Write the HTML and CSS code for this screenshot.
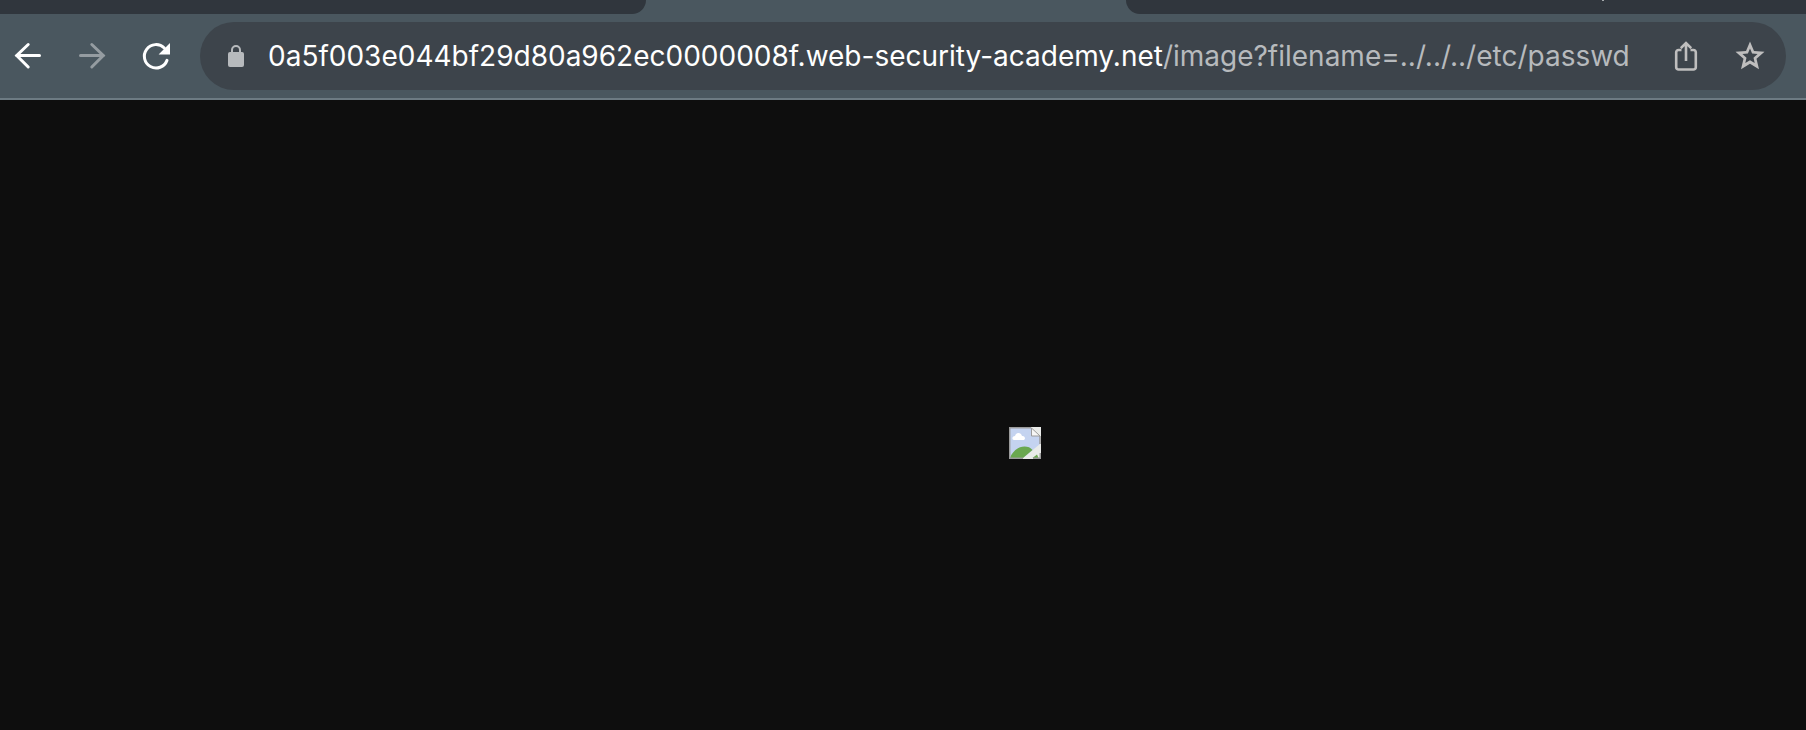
FILE: index.html
```html
<!DOCTYPE html>
<html lang="en">
<head>
<meta charset="utf-8">
<title>Image</title>
<link rel="stylesheet" href="styles.css">
</head>
<body>
<header class="browser">
  <div class="tabs">
    <div class="tab tab-before"></div>
    <div class="tab tab-after"><span class="tab-mark"></span></div>
  </div>
  <nav class="toolbar" aria-label="Browser toolbar">
    <div class="nav-buttons">
      <button class="nav-button" type="button" aria-label="Back">
        <svg class="icon" viewBox="0 0 32 32"><path class="line" d="M27.5 15.500H4.500M16.200 4.500 4.700 15.500l11.500 11.500"/></svg>
      </button>
      <button class="nav-button nav-button-off" type="button" aria-label="Forward">
        <svg class="icon" viewBox="0 0 32 32"><path class="line" d="M4.500 15.500h23M15.800 4.500 27.300 15.500 15.800 27"/></svg>
      </button>
      <button class="nav-button" type="button" aria-label="Reload">
        <svg class="icon" viewBox="0 0 32 32"><path class="line" d="M27 20.400A11.700 11.700 0 1 1 24.300 8"/><path class="solid" d="M30 3v11.400H18.600z"/></svg>
      </button>
    </div>
    <form class="address">
      <svg class="lock" viewBox="0 0 16 22"><path class="lock-shackle" d="M4 9V5a4 4 0 0 1 8 0v4"/><rect class="solid" y="7" width="16" height="15" rx="2"/></svg>
      <div class="url">
        <input class="url-part url-host" type="text" aria-label="Site address" value="0a5f003e044bf29d80a962ec0000008f.web-security-academy.net">
        <input class="url-part url-path" type="text" aria-label="Path" value="/image?filename=../../../etc/passwd">
      </div>
      <button class="action" type="button" aria-label="Share">
        <svg class="icon" viewBox="0 0 32 32"><path class="thin" d="M11.500 10H8.500a2.300 2.300 0 0 0-2.300 2.300v14.900a2.300 2.300 0 0 0 2.300 2.300h15a2.300 2.300 0 0 0 2.300-2.300V12.300A2.300 2.300 0 0 0 23.500 10h-3M16 21V3.500M10.800 8.200 16 3l5.200 5.200"/></svg>
      </button>
      <button class="action" type="button" aria-label="Bookmark this page">
        <svg class="icon" viewBox="0 0 32 32"><path class="solid-hole" d="M16 1.500 20 11l10.500.8-8 7 2.500 10.500-9-5.600-9 5.600 2.500-10.500-8-7L12 11zM16 8.600 13.900 13.600 8.400 14.100 12.500 17.700 11.300 23.100 16 20.200 20.700 23.100 19.500 17.700 23.600 14.100 18.100 13.600z"/></svg>
      </button>
    </form>
  </nav>
</header>
<main class="page">
  <svg class="broken" viewBox="0 0 32 32" role="img" aria-label="Broken image">
    <path fill="#e9ebe9" d="M0 0h32v32H0z"/>
    <path fill="#c4d3f0" d="M1 1h21v8h9v8L14 31H1z"/>
    <path fill="#fff" d="M5 13c-2.500-.5-2-4 1-4 1-4 6-4 7 0 3.500-.5 4 4 1 4z"/>
    <path fill="#6aa84f" d="M1 31c2-6 8-11.500 14.500-11.500 3.500 0 6 1 8 3.500L14 31zM23.500 31l4.500-3.500 1.500 3.500z"/>
    <path fill="none" stroke="#9b9b9b" stroke-width="1.500" d="M31 17V9M22 .7H.7v30.600H14M24 31.300h7.300V26"/>
    <path fill="#f6f6f6" stroke="#9b9b9b" d="M22.500 1v8h8.500z"/>
  </svg>
</main>
</body>
</html>
```
FILE: styles.css
```css
* {
  box-sizing: border-box;
}

body {
  margin: 0;
  min-height: 100vh;
  display: flex;
  flex-direction: column;
  background: #0e0e0e;
  font-family: Inter, "Liberation Sans", sans-serif;
}

.browser {
  background: #4a575f;
  border-bottom: 2px solid #6d7b83;
}

.tabs {
  display: flex;
  justify-content: space-between;
  height: 14px;
}

.tab {
  background: #30363d;
}

.tab-before {
  flex: 0 0 646px;
  border-bottom-right-radius: 16px;
}

.tab-after {
  flex: 0 0 680px;
  display: flex;
  border-bottom-left-radius: 16px;
}

.tab-mark {
  width: 2px;
  height: 1px;
  margin-left: 476px;
  background: #a5a9ac;
}

.toolbar {
  display: flex;
  align-items: center;
  gap: 16px;
  padding: 8px 20px 8px 0;
}

.nav-buttons {
  display: flex;
  gap: 8px;
}

button {
  display: flex;
  align-items: center;
  justify-content: center;
  padding: 0;
  border: 0;
  background: none;
  color: inherit;
}

.nav-button {
  width: 56px;
  height: 56px;
  color: #fff;
}

.nav-button-off {
  color: #959ca1;
}

.icon {
  width: 32px;
  height: 32px;
  fill: none;
}

.line {
  stroke: currentColor;
  stroke-width: 3;
  stroke-linecap: round;
}

.thin {
  stroke: currentColor;
  stroke-width: 2.6;
}

.solid {
  fill: currentColor;
}

.solid-hole {
  fill: currentColor;
  fill-rule: evenodd;
}

.address {
  flex: 1;
  min-width: 0;
  height: 68px;
  display: flex;
  align-items: center;
  padding: 0 4px 0 28px;
  border-radius: 34px;
  background: #3d444b;
  color: #b7babd;
}

.lock {
  width: 16px;
  height: 22px;
}

.lock-shackle {
  fill: none;
  stroke: currentColor;
  stroke-width: 2;
}

.url {
  flex: 1;
  min-width: 0;
  display: flex;
  margin-left: 24px;
  overflow: hidden;
}

.url-part {
  field-sizing: content;
  flex: none;
  height: 40px;
  padding: 0;
  border: 0;
  outline: 0;
  background: none;
  font: 400 28px/40px Inter, "Liberation Sans", sans-serif;
}

.url-host {
  color: #fff;
}

.url-path {
  color: #b7babd;
}

.action {
  width: 64px;
  height: 56px;
  color: #bfbebe;
}

.page {
  flex: 1;
  display: flex;
  align-items: center;
  justify-content: center;
  padding: 56px 0 0 244px;
}

.broken {
  width: 32px;
  height: 32px;
}
```
